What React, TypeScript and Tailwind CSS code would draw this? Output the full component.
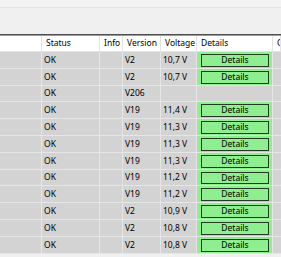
type Row = {
  status: string;
  version: string;
  voltage: string;
  details: boolean;
};

const rows: Row[] = [
  { status: "OK", version: "V2", voltage: "10,7 V", details: true },
  { status: "OK", version: "V2", voltage: "10,7 V", details: true },
  { status: "OK", version: "V206", voltage: "", details: false },
  { status: "OK", version: "V19", voltage: "11,4 V", details: true },
  { status: "OK", version: "V19", voltage: "11,3 V", details: true },
  { status: "OK", version: "V19", voltage: "11,3 V", details: true },
  { status: "OK", version: "V19", voltage: "11,3 V", details: true },
  { status: "OK", version: "V19", voltage: "11,2 V", details: true },
  { status: "OK", version: "V19", voltage: "11,2 V", details: true },
  { status: "OK", version: "V2", voltage: "10,9 V", details: true },
  { status: "OK", version: "V2", voltage: "10,8 V", details: true },
  { status: "OK", version: "V2", voltage: "10,8 V", details: true },
];

const widths = ["w-[42px]", "w-[58px]", "w-[23px]", "w-[38px]", "w-[36px]", "w-[76px]", "flex-1"];

// rows in the screenshot are ~16.8px apart; round each to whole pixels
const rowHeight = (i: number) =>
  Math.round((i + 1) * 16.8) - Math.round(i * 16.8);

const headers = ["", "Status", "Info", "Version", "Voltage", "Details", "C"];

export default function App() {
  return (
    <div
      className="w-[281px] h-[257px] overflow-hidden bg-[#f0f0f0] text-[8.5px] text-black"
      style={{ fontFamily: '"Noto Sans", sans-serif' }}
    >
      {/* toolbar area */}
      <div className="h-[8px] bg-[#f3f3f3] border-b border-[#e4e4e4]" />
      <div className="h-[26px] bg-[#f0f0f0]" />
      <div className="h-[1px] bg-[#4f4f4f]" />
      <div className="h-[1px] bg-[#9a9a9a]" />

      {/* header */}
      <div className="flex h-[16px] bg-white border-b border-[#e4e4e4]">
        {headers.map((h, i) => (
          <div
            key={i}
            className={`${widths[i]} shrink-0 border-r border-[#e4e4e4] pl-1 flex items-center whitespace-nowrap overflow-hidden`}
          >
            {h}
          </div>
        ))}
      </div>

      {rows.map((r, i) => {
        const values = ["", r.status, "", r.version, r.voltage];
        return (
          <div
            key={i}
            className="flex bg-[#d3d3d3] border-b border-[#e6e6e6]"
            style={{ height: rowHeight(i) }}
          >
            {values.map((v, j) => (
              <div
                key={j}
                className={`${widths[j]} shrink-0 border-r border-[#e6e6e6] pl-[2px] flex items-center whitespace-nowrap overflow-hidden`}
              >
                {v}
              </div>
            ))}
            {r.details ? (
              <div className="w-[76px] shrink-0 border-r border-[#e6e6e6] bg-[#8fee8f] pl-[4px] pr-[3px] pt-[2px] pb-[1px]">
                <div className="h-full border border-[#233a23] flex items-center justify-center">
                  Details
                </div>
              </div>
            ) : (
              <div className="w-[76px] shrink-0 border-r border-[#e6e6e6]" />
            )}
            <div className="flex-1" />
          </div>
        );
      })}
    </div>
  );
}
